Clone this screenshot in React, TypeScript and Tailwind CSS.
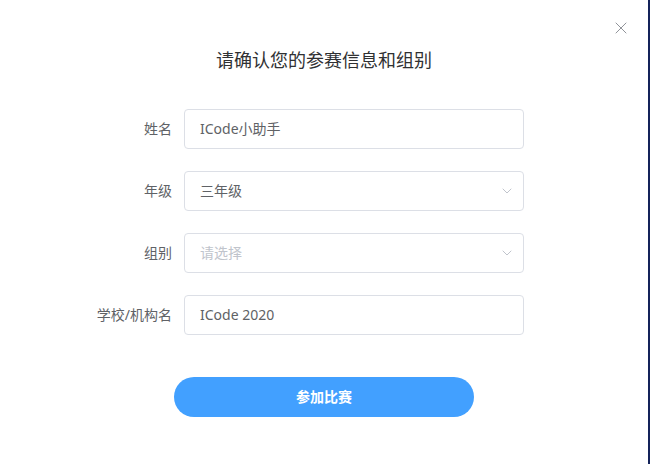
import { ChevronDown, X } from 'lucide-react';

const font = { fontFamily: '"Noto Sans", "Noto Sans CJK SC", sans-serif' };

function Row({ label, children }: { label: string; children: React.ReactNode }) {
  return (
    <div className="flex items-center">
      <label className="w-[100px] pr-3 text-right text-sm text-[#606266]">{label}</label>
      {children}
    </div>
  );
}

function TextBox({ value }: { value: string }) {
  return (
    <div className="flex h-10 w-[340px] items-center rounded border border-[#dcdfe6] px-[15px] text-sm text-[#606266]">
      {value}
    </div>
  );
}

function SelectBox({ value, placeholder }: { value?: string; placeholder: string }) {
  return (
    <div className="flex h-10 w-[340px] items-center justify-between rounded border border-[#dcdfe6] pl-[15px] pr-2 text-sm">
      <span className={value ? 'text-[#606266]' : 'text-[#c0c4cc]'}>{value ?? placeholder}</span>
      <ChevronDown className="h-4 w-4 text-[#c0c4cc]" strokeWidth={1.5} />
    </div>
  );
}

export default function App() {
  return (
    <div className="flex h-[464px] w-[650px] bg-[#14235a]" style={font}>
      <div className="relative flex h-full w-[648px] flex-col items-center bg-white">
        <button type="button" className="absolute right-[17px] top-[18px] text-[#909399]">
          <X className="h-5 w-5" strokeWidth={1.2} />
        </button>
        <h2 className="mt-[48px] text-lg leading-6 text-[#303133]">请确认您的参赛信息和组别</h2>

        <div className="mt-[37px] flex w-full flex-col gap-[22px] pl-[84px]">
          <Row label="姓名">
            <TextBox value="ICode小助手" />
          </Row>
          <Row label="年级">
            <SelectBox value="三年级" placeholder="请选择" />
          </Row>
          <Row label="组别">
            <SelectBox placeholder="请选择" />
          </Row>
          <Row label="学校/机构名">
            <TextBox value="ICode 2020" />
          </Row>
        </div>

        <button
          type="button"
          className="mt-[42px] h-10 w-[300px] rounded-full bg-[#42a0ff] text-sm font-bold text-white"
        >
          参加比赛
        </button>
      </div>
    </div>
  );
}
